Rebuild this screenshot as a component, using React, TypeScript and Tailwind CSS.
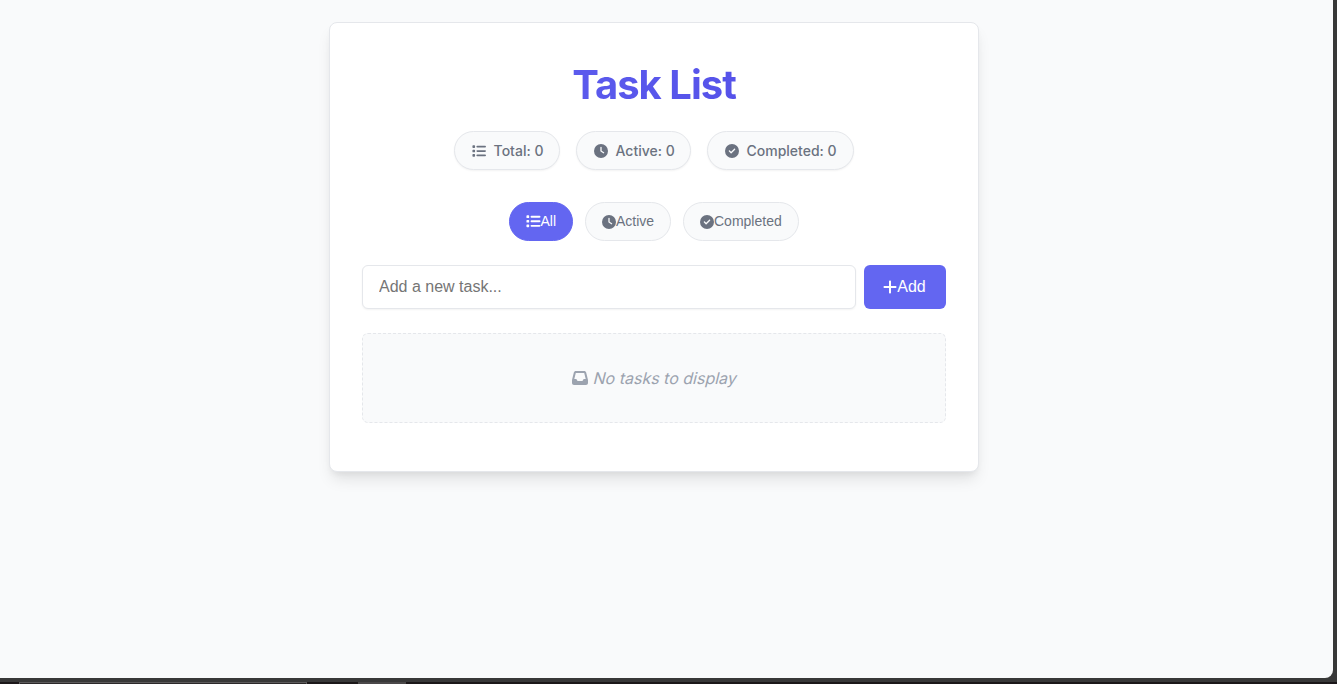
import type { ReactNode } from "react";
import { FaList, FaClock, FaCircleCheck, FaPlus, FaInbox } from "react-icons/fa6";

function Stat({ icon, label, box }: { icon: ReactNode; label: string; box: string }) {
  return (
    <div
      className={`flex h-[39px] items-center gap-2 whitespace-nowrap rounded-full border border-[#e5e7eb] bg-[#f9fafb] text-[14px] font-medium text-[#6b7280] shadow-[0_1px_2px_rgba(0,0,0,0.05)] ${box}`}
    >
      {icon}
      <span>{label}</span>
    </div>
  );
}

function Filter({ icon, label, width, active }: { icon: ReactNode; label: string; width: string; active?: boolean }) {
  const tone = active
    ? "border-[#6366f1] bg-[#6366f1] text-white"
    : "border-[#e5e7eb] bg-[#f9fafb] text-[#6b7280]";
  return (
    <button
      type="button"
      className={`flex h-[39px] items-center whitespace-nowrap rounded-full border pl-4 font-['Liberation_Sans',sans-serif] text-[14px] ${tone} ${width}`}
    >
      {icon}
      <span>{label}</span>
    </button>
  );
}

export default function App() {
  return (
    <div className="flex h-[684px] w-[1337px] flex-col overflow-hidden bg-[#383838] font-['Inter',sans-serif]">
      <div className="h-[678px] w-[1333px] rounded-br-[8px] bg-[#f9fafb] pl-[329px] pt-[22px]">
        <main className="flex h-[450px] w-[650px] flex-col rounded-[8px] border border-[#e5e7eb] bg-white px-8 pt-8 shadow-[0_10px_15px_-3px_rgba(0,0,0,0.1),0_4px_6px_-2px_rgba(0,0,0,0.05)]">
          <h1 className="h-[60px] bg-linear-135 from-[#6366f1] to-[#4f46e5] bg-clip-text text-center text-[40px] font-bold leading-[60px] tracking-[-1px] text-transparent">
            Task List
          </h1>
          <section className="mt-4 flex justify-center gap-4">
            <Stat icon={<FaList />} label="Total: 0" box="w-[106px] pl-[16.6px]" />
            <Stat icon={<FaClock />} label="Active: 0" box="w-[115px] pl-[16.5px]" />
            <Stat icon={<FaCircleCheck />} label="Completed: 0" box="w-[147px] pl-[16.5px]" />
          </section>
          <section className="mt-8 flex justify-center gap-3">
            <Filter icon={<FaList className="size-[14.5px]" />} label="All" width="w-[64px]" active />
            <Filter icon={<FaClock />} label="Active" width="w-[86px]" />
            <Filter icon={<FaCircleCheck />} label="Completed" width="w-[116px]" />
          </section>
          <form className="mt-6 flex h-11 gap-2 font-['Liberation_Sans',sans-serif] text-[16px]">
            <input
              type="text"
              placeholder="Add a new task..."
              className="min-w-0 flex-1 rounded-[6px] border border-[#e5e7eb] bg-white px-4 shadow-[0_1px_2px_rgba(0,0,0,0.05)] placeholder:text-[#757575]"
            />
            <button type="button" className="flex w-[82px] items-center rounded-[6px] bg-[#6366f1] pl-[19.3px] text-white">
              <FaPlus className="w-[14px]" />
              <span>Add</span>
            </button>
          </form>
          <section className="mt-6 flex h-[90px] items-center rounded-[6px] border border-dashed border-[#e5e7eb] bg-[#f9fafb] pl-[209px] text-[16px] text-[#9ca3af]">
            <FaInbox />
            <em className="ml-[6.3px] inline-block -skew-x-[14deg] not-italic">No tasks to display</em>
          </section>
        </main>
      </div>
      <div className="mt-1 flex h-[2px] bg-[#1b1719]">
        <div className="ml-[19px] w-[288px] border border-b-0 border-[#5c5a5b] bg-[#2b2829]" />
        <div className="ml-[51px] w-12 bg-[#4a4849]" />
      </div>
    </div>
  );
}
